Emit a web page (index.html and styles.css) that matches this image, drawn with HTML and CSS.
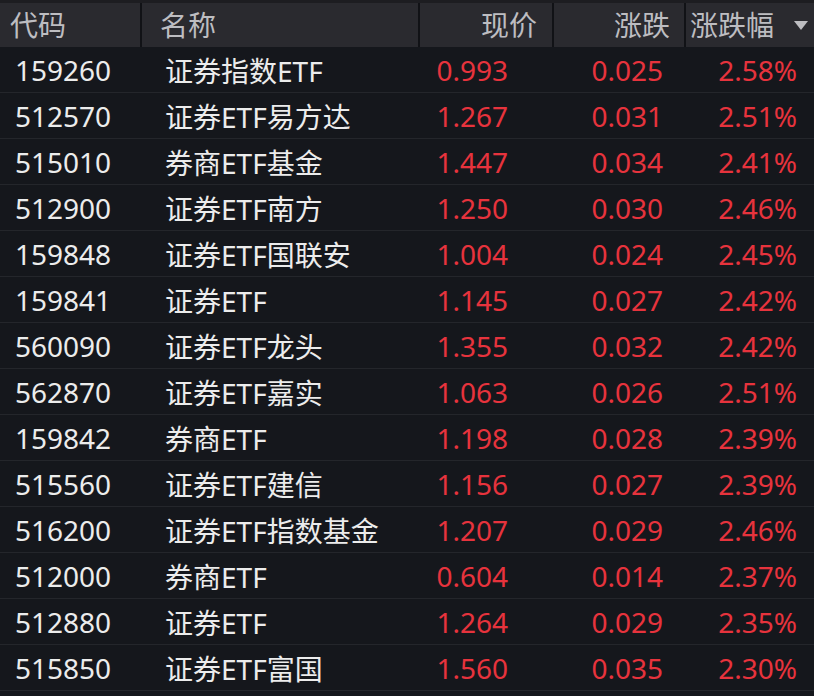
FILE: index.html
```html
<!DOCTYPE html>
<html lang="zh">
<head>
<meta charset="utf-8">
<link rel="stylesheet" href="styles.css">
</head>
<body>
<div class="table">
  <div class="head">
    <div class="h c-code">代码</div>
    <div class="h c-name">名称</div>
    <div class="h c-price">现价</div>
    <div class="h c-chg">涨跌</div>
    <div class="h c-pct">涨跌幅<span class="tri"></span></div>
  </div>
  <div class="row"><div class="c-code">159260</div><div class="c-name">证券指数ETF</div><div class="c-price up">0.993</div><div class="c-chg up">0.025</div><div class="c-pct up">2.58%</div></div>
  <div class="row"><div class="c-code">512570</div><div class="c-name">证券ETF易方达</div><div class="c-price up">1.267</div><div class="c-chg up">0.031</div><div class="c-pct up">2.51%</div></div>
  <div class="row"><div class="c-code">515010</div><div class="c-name">券商ETF基金</div><div class="c-price up">1.447</div><div class="c-chg up">0.034</div><div class="c-pct up">2.41%</div></div>
  <div class="row"><div class="c-code">512900</div><div class="c-name">证券ETF南方</div><div class="c-price up">1.250</div><div class="c-chg up">0.030</div><div class="c-pct up">2.46%</div></div>
  <div class="row"><div class="c-code">159848</div><div class="c-name">证券ETF国联安</div><div class="c-price up">1.004</div><div class="c-chg up">0.024</div><div class="c-pct up">2.45%</div></div>
  <div class="row"><div class="c-code">159841</div><div class="c-name">证券ETF</div><div class="c-price up">1.145</div><div class="c-chg up">0.027</div><div class="c-pct up">2.42%</div></div>
  <div class="row"><div class="c-code">560090</div><div class="c-name">证券ETF龙头</div><div class="c-price up">1.355</div><div class="c-chg up">0.032</div><div class="c-pct up">2.42%</div></div>
  <div class="row"><div class="c-code">562870</div><div class="c-name">证券ETF嘉实</div><div class="c-price up">1.063</div><div class="c-chg up">0.026</div><div class="c-pct up">2.51%</div></div>
  <div class="row"><div class="c-code">159842</div><div class="c-name">券商ETF</div><div class="c-price up">1.198</div><div class="c-chg up">0.028</div><div class="c-pct up">2.39%</div></div>
  <div class="row"><div class="c-code">515560</div><div class="c-name">证券ETF建信</div><div class="c-price up">1.156</div><div class="c-chg up">0.027</div><div class="c-pct up">2.39%</div></div>
  <div class="row"><div class="c-code">516200</div><div class="c-name">证券ETF指数基金</div><div class="c-price up">1.207</div><div class="c-chg up">0.029</div><div class="c-pct up">2.46%</div></div>
  <div class="row"><div class="c-code">512000</div><div class="c-name">券商ETF</div><div class="c-price up">0.604</div><div class="c-chg up">0.014</div><div class="c-pct up">2.37%</div></div>
  <div class="row"><div class="c-code">512880</div><div class="c-name">证券ETF</div><div class="c-price up">1.264</div><div class="c-chg up">0.029</div><div class="c-pct up">2.35%</div></div>
  <div class="row"><div class="c-code">515850</div><div class="c-name">证券ETF富国</div><div class="c-price up">1.560</div><div class="c-chg up">0.035</div><div class="c-pct up">2.30%</div></div>
</div>
</body>
</html>
```
FILE: styles.css
```css
html, body {
  margin: 0;
  padding: 0;
  background: #15171c;
}
body {
  width: 814px;
  height: 696px;
  overflow: hidden;
  font-family: "Noto Sans", "Noto Sans CJK SC", sans-serif;
  font-size: 28px;
}
.table {
  display: flex;
  flex-direction: column;
}
.head {
  display: grid;
  grid-template-columns: 142px 278px 134px 132px 128px;
  height: 47px;
  background: #2a2a2f;
  border-top: 3px solid #1d1d21;
  box-sizing: border-box;
  color: #bdbdc1;
}
.h {
  display: flex;
  align-items: center;
  border-right: 2px solid #111216;
  line-height: 1;
  font-size: 28px;
}
.h:last-child { border-right: none; }
.head .c-code { padding-left: 10px; }
.head .c-name { padding-left: 18px; }
.head .c-price { justify-content: flex-end; padding-right: 15px; }
.head .c-chg { justify-content: flex-end; padding-right: 14px; }
.head .c-pct { padding-left: 4px; }
.tri {
  margin-left: 20px;
  width: 0;
  height: 0;
  border-left: 7px solid transparent;
  border-right: 7px solid transparent;
  border-top: 9px solid #bdbdc1;
}
.row {
  display: grid;
  grid-template-columns: 142px 278px 134px 132px 128px;
  height: 46px;
  align-items: center;
  border-bottom: 1px solid #24262b;
  box-sizing: border-box;
  color: #ececec;
}
.row .c-code { padding-left: 15px; }
.row .c-name { padding-left: 23px; }
.row .c-price { text-align: right; padding-right: 46px; }
.row .c-chg { text-align: right; padding-right: 23px; }
.row .c-pct { text-align: right; padding-right: 17px; }
.up { color: #e7333d; }
```
